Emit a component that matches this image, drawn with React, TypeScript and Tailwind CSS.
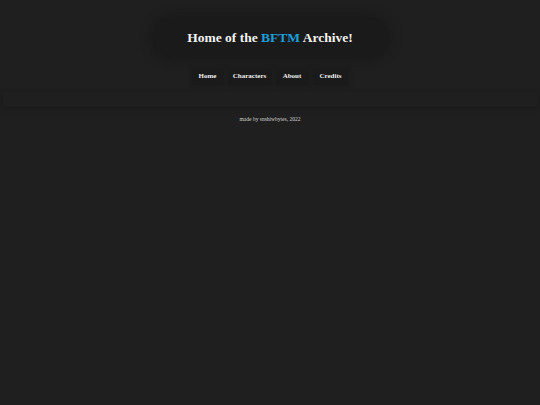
export default function App() {
  return (
    <div className="min-h-[405px] w-full bg-[#1f1f1f] text-white" style={{ fontFamily: '"Liberation Serif", "Times New Roman", serif' }}>
      <div className="flex justify-center pt-[18px]">
        <div className="flex h-[39px] w-[235px] items-center justify-center rounded-full bg-[#1a1a1a] shadow-[0_0_8px_4px_#1a1a1a]">
          <h1 className="text-[13.5px] font-bold leading-none text-[#f2f2f2]">
            Home of the <span className="text-[#1a9fd9]">BFTM</span> Archive!
          </h1>
        </div>
      </div>
      <nav className="mt-[11px] flex justify-center gap-[5px]">
        {[
          ["Home", "w-[31px]"],
          ["Characters", "w-[43px]"],
          ["About", "w-[32px]"],
          ["Credits", "w-[35px]"],
        ].map(([label, w]) => (
          <div key={label} className={`flex h-[17px] items-center justify-center bg-[#1a1a1a] text-[7px] font-bold text-[#eeeeee] shadow-[0_0_3px_1px_#1c1c1c] ${w}`}>
            {label}
          </div>
        ))}
      </nav>
      <div className="mx-[3px] mt-[7px] h-[15px] shadow-[0_1px_4px_0px_#191919]" />
      <p className="mt-[8px] text-center text-[5.5px] text-[#d0d0d0]">made by snshiwbytes, 2022</p>
    </div>
  );
}
